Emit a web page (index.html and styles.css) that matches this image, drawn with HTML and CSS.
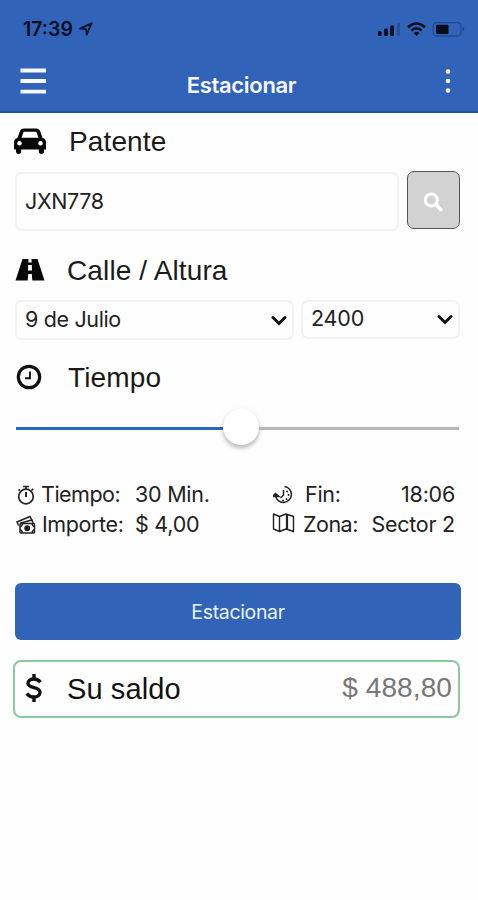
FILE: index.html
```html
<!DOCTYPE html>
<html lang="es">
<head>
<meta charset="utf-8">
<title>Estacionar</title>
<link rel="stylesheet" href="styles.css">
</head>
<body>
<header class="header">
  <div class="status">
    <span class="time">17:39</span>
    <svg class="location" width="14" height="14" viewBox="0 0 14 14"><path d="M1.200 6.600 12.600 1.200 7.600 12.600 7 7.200Z" fill="none" stroke="#07122c" stroke-width="1.800" stroke-linejoin="round"/></svg>
    <svg class="signals" width="88" height="18" viewBox="0 0 88 18">
      <rect x="0" y="11" width="3.600" height="5" rx="1"/><rect x="6.200" y="8.500" width="3.600" height="7.500" rx="1"/><rect x="12.300" y="5.500" width="3.600" height="10.500" rx="1"/><rect x="19" y="3" width="3" height="13" rx="1" opacity=".2"/>
      <g fill="none" stroke="#050c1c" stroke-width="2.500"><path d="M30 7.300q8.500-7.600 17 0"/><path d="M33.300 10.600q5.200-4.600 10.400 0"/></g><path d="m35.600 13 2.900 3 2.900-3q-2.900-2.300-5.800 0z"/>
      <rect x="55" y="2.600" width="28" height="13.400" rx="3.500" fill="none" stroke="#1f4a94" stroke-width="1.300"/><rect x="58" y="4.700" width="12.500" height="9.300" rx="1"/><path d="M84.500 6.500q4 2.500 0 5z" fill="#1f4a94"/>
    </svg>
  </div>
  <div class="nav">
    <svg class="menu" width="28" height="28" viewBox="0 0 28 28"><path d="M1.500 3.500h25.500M1.500 14h25.500M1.500 24.700h25.500" stroke="#f7faff" stroke-width="3.800"/></svg>
    <h1 class="title">Estacionar</h1>
    <svg class="more" width="8" height="26" viewBox="0 0 8 26" fill="#f7faff"><circle cx="4" cy="3.500" r="2.300"/><circle cx="4" cy="13" r="2.300"/><circle cx="4" cy="22.500" r="2.300"/></svg>
  </div>
</header>
<main class="content">
  <h2 class="heading">
    <svg class="icon" width="34" height="28" viewBox="0 0 34 28"><path fill-rule="evenodd" d="M4.500 11 6.700 4.500Q7.700 1.500 11 1.500h12q3.300 0 4.300 3L29.500 11q3.500.7 3.500 4.500v7h-2v1.800a2.600 2.600 0 0 1-5.200 0v-1.800H8.200v1.800a2.600 2.600 0 0 1-5.200 0v-1.800H1v-7Q1 11.700 4.500 11zM8.600 10.800h16.800l-1.700-5.300q-.3-.8-1.200-.8h-11q-.9 0-1.200.8zM6.500 14a2.300 2.300 0 1 0 .01 0zM27.500 14a2.300 2.300 0 1 0 .01 0z"/></svg>
    <span>Patente</span>
  </h2>
  <div class="plate-row">
    <div class="field plate">JXN778</div>
    <button class="search" aria-label="Buscar"><svg width="20" height="20" viewBox="0 0 20 20" fill="none" stroke="#fff"><circle cx="8.300" cy="8" r="6.100" stroke-width="3"/><path d="m12.800 12.500 5 5" stroke-width="3.600" stroke-linecap="round"/></svg></button>
  </div>
  <h2 class="heading street-heading">
    <svg class="icon road" width="30" height="24" viewBox="0 0 30 24"><path fill-rule="evenodd" d="M7.500 1h6l-.2 3.500h3.400L16.500 1h6L29.500 22.500H17.300l-.5-6.500h-3.600l-.5 6.500H.5zM13.200 7 13 12.500h4L16.800 7z"/></svg>
    <span>Calle / Altura</span>
  </h2>
  <div class="select-row">
    <div class="field select"><span>9 de Julio</span><svg width="16" height="12" viewBox="0 0 16 12"><path d="m2 2.500 6 6 6-6" fill="none" stroke="#111" stroke-width="3" stroke-linecap="round"/></svg></div>
    <div class="field select number"><span>2400</span><svg width="16" height="12" viewBox="0 0 16 12"><path d="m2 2.500 6 6 6-6" fill="none" stroke="#111" stroke-width="3" stroke-linecap="round"/></svg></div>
  </div>
  <h2 class="heading time-heading">
    <svg class="icon clock" width="26" height="26" viewBox="0 0 26 26" fill="none" stroke="#111"><circle cx="13" cy="13" r="10.700" stroke-width="3.200"/><path d="M14 7.500v6.700H9" stroke-width="1.900"/></svg>
    <span>Tiempo</span>
  </h2>
  <div class="slider"><span class="filled"></span><span class="knob"></span><span class="rest"></span></div>
  <div class="details">
    <svg class="glyph" width="20" height="20" viewBox="0 0 20 20" fill="none" stroke="#222" stroke-width="1.700"><circle cx="10" cy="11.500" r="7.300"/><path d="M10 4V1.500M7 1.500h6M15.500 5.500l1.700-1.700M2.500 5.700l1.300-1.300"/><path d="M10 7v5" stroke-width="2"/></svg>
    <span class="label">Tiempo:</span><span class="value">30 Min.</span>
    <svg class="glyph" width="22" height="20" viewBox="0 0 22 20" fill="none" stroke="#222" stroke-width="1.500"><path d="M2.500 10.500a8 8 0 1 0 9-9"/><path d="m-.5 11.500 3-3 3.500 3z" fill="#222"/><path d="M10.500 5v5l-3 3"/><path d="M14 6.500h.1M15.500 10h.1M13.500 14h.1M10 15.500h.1" stroke-linecap="round" stroke-width="1.800"/></svg>
    <span class="label fin">Fin:</span><span class="value end">18:06</span>
    <svg class="glyph" width="20" height="20" viewBox="0 0 20 20" fill="none" stroke="#222" stroke-width="1.500"><rect x="4" y="8.500" width="14.500" height="9.500" rx="1"/><path d="M2.500 10.500 1 7 14 1.500l2 4M4 8.200 16 5l1 3M4 11.500q2 0 2.500-3M18.500 11.500q-2 0-2.500-3M4 15q2 0 2.500 3M18.500 15q-2 0-2.500 3"/><circle cx="11.200" cy="13.200" r="2.200" fill="#222"/></svg>
    <span class="label importe">Importe:</span><span class="value">$ 4,00</span>
    <svg class="glyph map" width="24" height="20" viewBox="0 0 24 20" fill="none" stroke="#222" stroke-width="1.400" stroke-linejoin="round"><path d="M1.500 1 7.500 3.500 14 1l7.500 2.500V18.500L14 16 7.500 18.500 1.500 16zM7.500 3.500v15"/><path d="M15 1.500V16" stroke-width="2.200"/></svg>
    <span class="label zona">Zona:</span><span class="value end">Sector 2</span>
  </div>
  <button class="park">Estacionar</button>
  <div class="balance">
    <svg class="dollar" width="18" height="30" viewBox="0 0 18 30" fill="none" stroke="#111" stroke-width="3.400"><path d="M15.500 9.300C13.500 6.600 11.500 6 8.800 6 5.500 6 3 7.600 3 10.300 3 16.200 15 13 15 19.200c0 3-2.600 4.800-6 4.800-3 0-5.300-.9-7.200-3.500"/><path d="M9 1v5M9 24v5"/></svg>
    <span class="balance-label">Su saldo</span>
    <span class="amount">$ 488,80</span>
  </div>
</main>
</body>
</html>
```

FILE: styles.css
```css
* { box-sizing: border-box; }
body { margin: 0; height: 900px; background: #fefefe; color: #222; font-family: Inter, sans-serif; font-size: 21.5px; line-height: 28px; }
svg { display: block; flex: none; }
h1, h2 { margin: 0; font-weight: normal; }
button { font: inherit; padding: 0; }
.header { height: 113px; background: #3163b9; border-bottom: 2px solid #2451a8; }
.status { height: 57px; padding: 15px 12px 0 23px; display: flex; }
.time { width: 51px; color: #060e20; font-size: 19.5px; font-weight: 600; white-space: nowrap; }
.location { margin: 7px 0 0 5px; }
.signals { margin: 5px 0 0 auto; fill: #050c1c; }
.nav { display: flex; justify-content: space-between; padding: 0 26px 0 19px; }
.menu { margin-top: 10px; }
.more { margin-top: 11px; }
.title { margin: 14px 0 0 -8px; color: #f7faff; font-size: 22px; font-weight: 600; letter-spacing: -.32px; }
.content { padding: 12px 17px 0 15px; }
.heading { display: flex; height: 32px; color: #1a1a1a; font: 28px/32px "Liberation Sans", sans-serif; letter-spacing: .13px; }
.heading span { margin: 1px 0 0 22px; }
.icon { margin: 2px 0 0 -2px; fill: #080808; }
.plate-row { display: flex; gap: 8px; margin-top: 15px; height: 59px; }
.field { border: 2px solid #f2f2f2; border-radius: 7px; letter-spacing: -.35px; }
.plate { width: 384px; padding: 13px 8px; }
.search { width: 53px; height: 58px; margin-top: -1px; display: grid; place-items: center; background: #d2d2d2; border: 1.5px solid #555; border-radius: 7px; }
.search svg { margin: 3px 2px 0 0; }
.street-heading { margin-top: 24px; }
.road { margin: 3px 0 0; }
.street-heading span { margin: 0 0 0 22px; }
.select-row { display: flex; gap: 7px; margin: 13px 0 0; }
.select { width: 279px; height: 40px; display: flex; justify-content: space-between; padding: 3px 5px 0 8px; }
.select svg { margin-top: 10px; }
.number { width: 159px; height: 39px; padding-top: 2px; letter-spacing: -.2px; }
.time-heading { margin-top: 22px; }
.clock { margin: 2px 0 0 1px; fill: none; }
.time-heading span { margin: 0 0 0 26px; }
.slider { display: flex; align-items: center; height: 36px; margin: 16px 2px 0 1px; }
.filled { width: 207px; height: 3px; background: #2468cc; }
.knob { width: 36px; height: 36px; margin-top: -2px; border-radius: 50%; background: #fff; box-shadow: 0 3px 4px #0004, 0 0 8px #0000000c; }
.rest { flex: 1; height: 3px; background: #b7b7b7; }
.details { display: grid; grid-template-columns: 26px 94px 137px 31px 68px 84px; grid-auto-rows: 30px; margin-top: 34px; font-size: 21.5px; white-space: nowrap; letter-spacing: -.25px; }
.glyph { margin: 5px 0 0 1px; }
.map { margin: 3px 0 0; }
.label { letter-spacing: -.5px; }
.fin { padding-left: 2px; letter-spacing: -.3px; }
.importe { padding-left: 1px; letter-spacing: -.4px; }
.end { text-align: right; }
.park { display: block; width: 446px; height: 57px; margin-top: 43px; border: 0; border-radius: 6px; background: #3163b9; color: #e8f3ff; font-size: 19.5px; letter-spacing: -.35px; }
.balance { display: flex; width: 447px; height: 58px; margin: 20px 0 0 -2px; padding: 0 6px 0 11px; border: 2px solid #88c9a0; border-radius: 8px; font: 28px/32px "Liberation Sans", sans-serif; }
.dollar { margin: 11px 0 0 -1px; }
.balance-label { margin: 11px 0 0 24px; font-size: 29px; color: #111; letter-spacing: .1px; }
.amount { margin: 10px 0 0 auto; color: #777; letter-spacing: .1px; }
```
